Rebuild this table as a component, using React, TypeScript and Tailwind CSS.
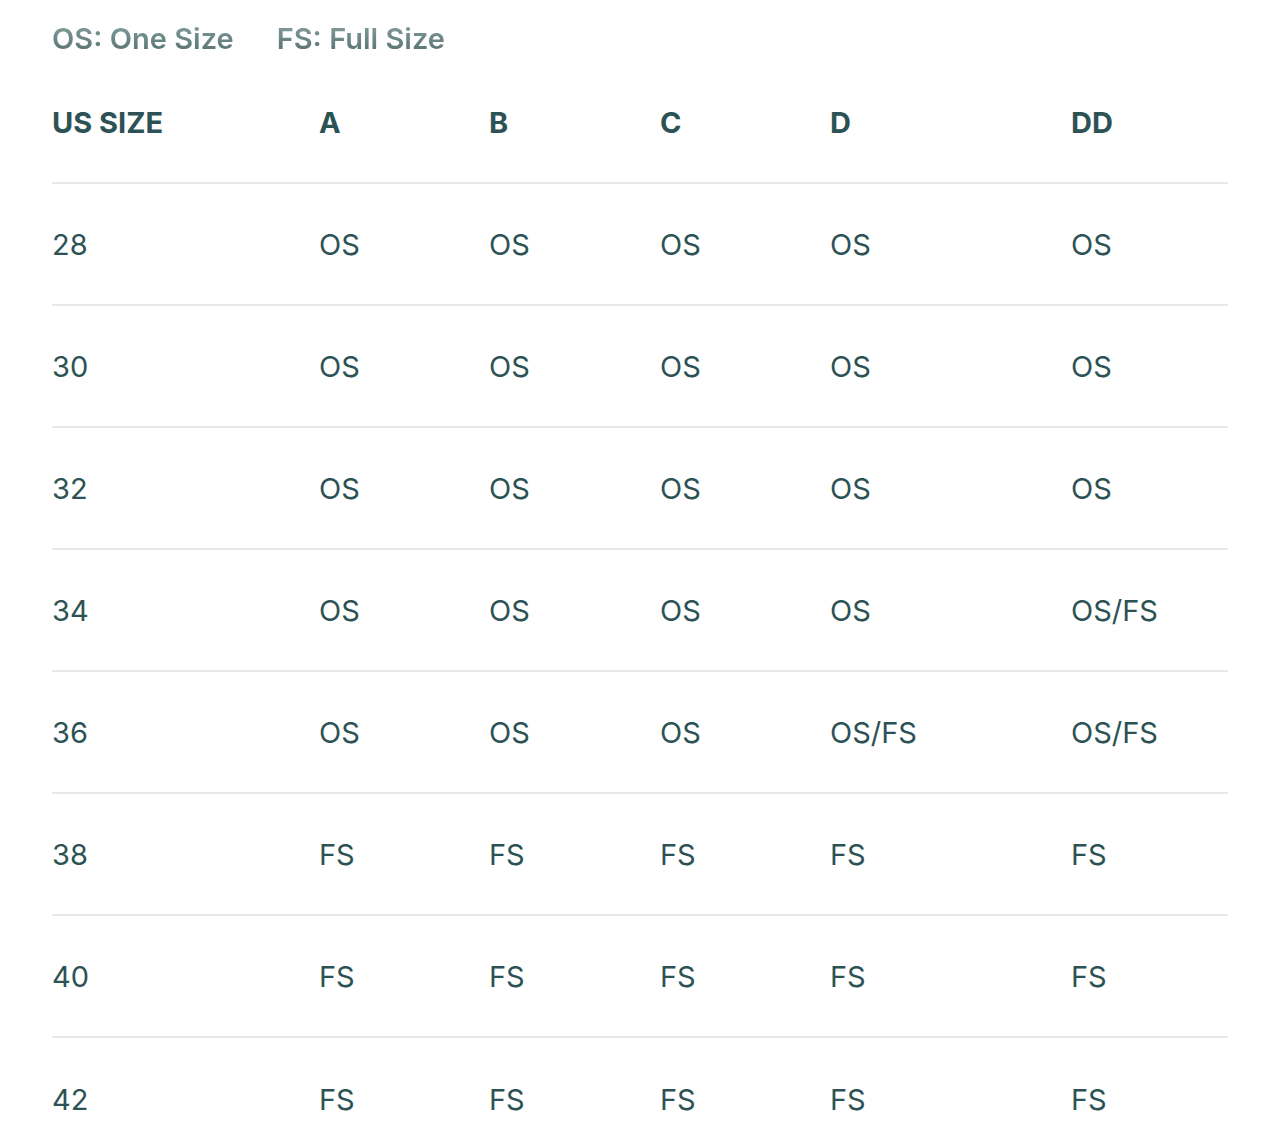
const columns = ["US SIZE", "A", "B", "C", "D", "DD"]

const rows: string[][] = [
  ["28", "OS", "OS", "OS", "OS", "OS"],
  ["30", "OS", "OS", "OS", "OS", "OS"],
  ["32", "OS", "OS", "OS", "OS", "OS"],
  ["34", "OS", "OS", "OS", "OS", "OS/FS"],
  ["36", "OS", "OS", "OS", "OS/FS", "OS/FS"],
  ["38", "FS", "FS", "FS", "FS", "FS"],
  ["40", "FS", "FS", "FS", "FS", "FS"],
  ["42", "FS", "FS", "FS", "FS", "FS"],
]

const grid = "grid grid-cols-[267px_170px_171px_170px_241px_1fr] items-center"

export default function App() {
  return (
    <div className="bg-white min-h-screen px-[52px] font-['Inter','Lato',sans-serif] text-[#2c5255]">
      <div className="h-[61px] pt-[16px] flex items-center gap-[43px] text-[29px] font-semibold">
        <span className="bg-gradient-to-b from-[#8fa9a7] to-[#4b6766] bg-clip-text text-transparent">OS: One Size</span>
        <span className="bg-gradient-to-b from-[#8fa9a7] to-[#4b6766] bg-clip-text text-transparent">FS: Full Size</span>
      </div>

      <div className={`${grid} h-[123px] pt-[2px] border-b-2 border-[#e8e8e8] text-[29px] font-bold`}>
        {columns.map((c) => (
          <div key={c}>{c}</div>
        ))}
      </div>

      {rows.map((r, i) => (
        <div
          key={r[0]}
          className={`${grid} h-[122px] pt-[1px] text-[29px] ${i < rows.length - 1 ? "border-b-2 border-[#e8e8e8]" : ""}`}
        >
          {r.map((cell, j) => (
            <div key={j}>{cell}</div>
          ))}
        </div>
      ))}
    </div>
  )
}
